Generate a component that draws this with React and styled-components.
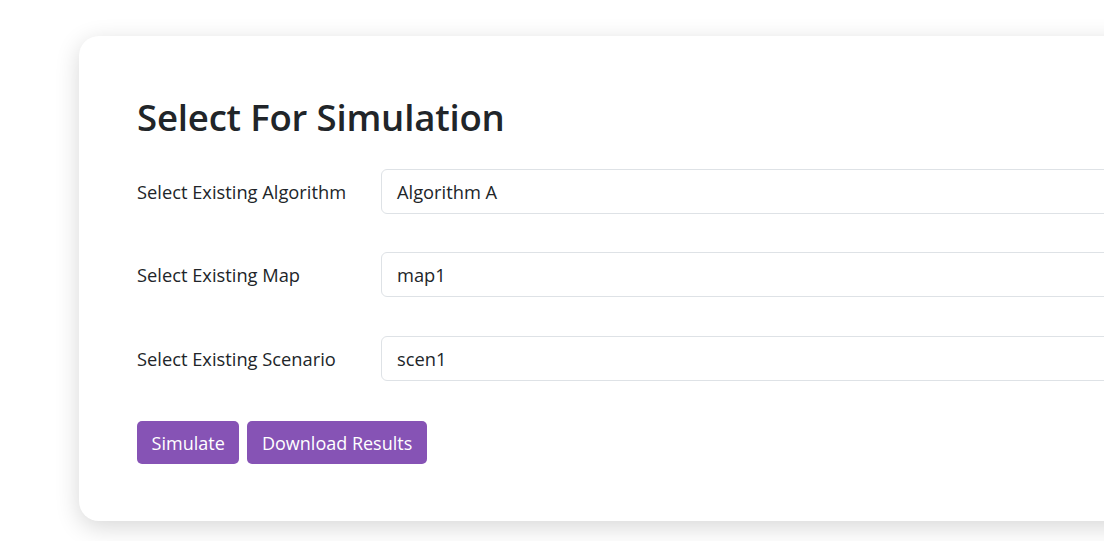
import React from "react";
import styled, { createGlobalStyle } from "styled-components";

const GlobalStyle = createGlobalStyle`
  body {
    margin: 0;
    background-color: #ffffff;
    font-family: "Open Sans", "Noto Sans", sans-serif;
    color: #212529;
    overflow: hidden;
  }
`;

const Page = styled.div`
  padding: 36px 0 20px 79px;
  width: 1300px;
`;

const Card = styled.div`
  background-color: #fff;
  border-radius: 20px;
  box-shadow: 0 6px 24px rgba(0, 0, 0, 0.16);
  padding: 60px 58px 57px 58px;
`;

const Title = styled.h1`
  margin: 0 0 29px 0;
  font-size: 36.6px;
  font-weight: 600;
  line-height: 1.2;
  letter-spacing: -0.2px;
`;

const Row = styled.div`
  display: grid;
  grid-template-columns: 244px 1fr;
  align-items: center;
  margin-bottom: 38.5px;
`;

const Label = styled.label`
  font-size: 18.3px;
`;

const Input = styled.div`
  height: 45px;
  box-sizing: border-box;
  display: flex;
  align-items: center;
  padding: 0 15px;
  border: 1px solid #dee2e6;
  border-radius: 6px;
  font-size: 18.3px;
`;

const Buttons = styled.div`
  display: flex;
  gap: 8px;
  padding-top: 2px;
`;

const Button = styled.button`
  height: 43px;
  padding: 0 14.6px;
  border: none;
  border-radius: 5px;
  background-color: #8653b5;
  color: #fff;
  font-family: inherit;
  font-size: 18px;
`;

const fields = [
  { label: "Select Existing Algorithm", value: "Algorithm A" },
  { label: "Select Existing Map", value: "map1" },
  { label: "Select Existing Scenario", value: "scen1" },
];

export default function App() {
  return (
    <>
      <GlobalStyle />
      <Page>
        <Card>
          <Title>Select For Simulation</Title>
          {fields.map((f) => (
            <Row key={f.label}>
              <Label>{f.label}</Label>
              <Input>{f.value}</Input>
            </Row>
          ))}
          <Buttons>
            <Button>Simulate</Button>
            <Button>Download Results</Button>
          </Buttons>
        </Card>
      </Page>
    </>
  );
}
